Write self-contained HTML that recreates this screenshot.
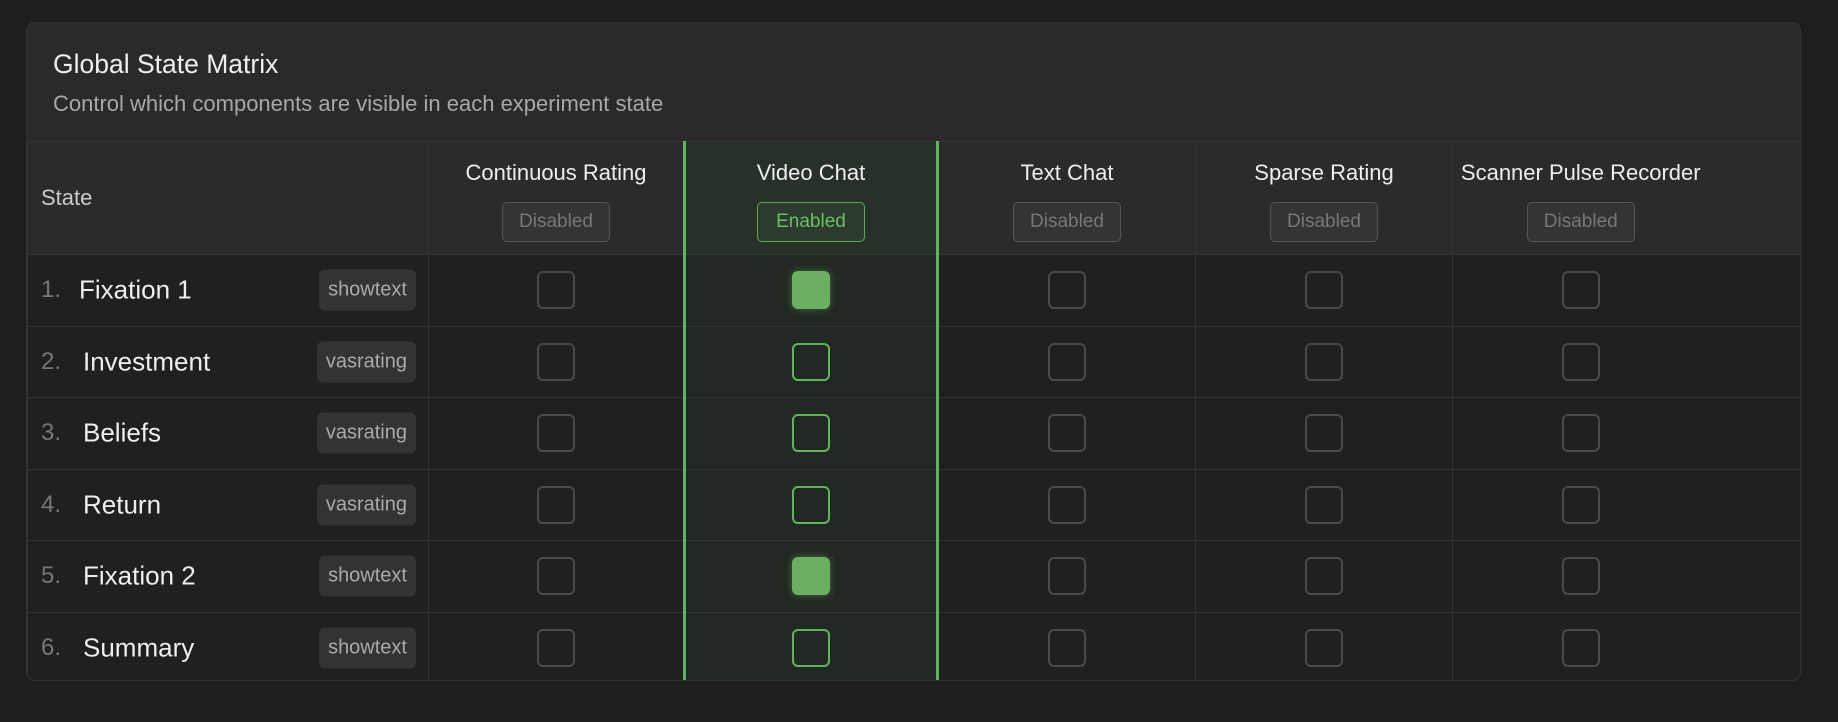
<!DOCTYPE html>
<html><head><style>
body{margin:0;background:#1e1e1e;font-family:"Liberation Sans",sans-serif;width:1838px;height:722px;overflow:hidden}
.card{position:absolute;left:26px;top:22px;width:1775px;height:659px;background:#2a2a2a;border:1px solid #333;border-radius:9px;overflow:hidden;box-sizing:border-box}
.t{position:absolute;left:26px;top:26px;font-size:26.5px;color:#eee}
.s{position:absolute;left:26px;top:68px;font-size:22px;color:#a8a8a8}
table{position:absolute;left:0;top:118px;border-collapse:collapse;table-layout:fixed;width:1775px}
td,th{border:1px solid #333;padding:0;text-align:center}
th{height:112px;background:#2b2b2b;font-weight:normal;color:#eee;font-size:22px;vertical-align:top;white-space:nowrap}
td{height:70.5px;background:#202020}
.fl{border-left-style:hidden!important}
.hv{background:#28302a!important}
.bv{background:#222823!important}
.gl{border-left:3px solid #62b45a}.gr{border-right:3px solid #62b45a}
.badge{display:inline-block;margin-top:16px;width:106px;height:38px;line-height:38px;border:1px solid #555;border-radius:5px;background:#343434;color:#777;font-size:19px}
.en{border-color:#5fa955;color:#6cbf62;background:#2c3b2d}
.cb{display:inline-block;width:34px;height:34px;border:2.5px solid #4a4a4a;border-radius:6px;vertical-align:middle}
.g{border-color:#62b45a}
.f{border-color:#6ab060;background:#6ab060;box-shadow:0 0 8px rgba(106,176,96,.5)}
.st{text-align:left;position:relative;font-size:26px;color:#eee}
.n{color:#777;position:absolute;left:13px;top:50%;transform:translateY(-50%);font-size:24px}
.nm{position:absolute;left:55px;top:50%;transform:translateY(-50%)}
.tag{position:absolute;right:12px;top:50%;transform:translateY(-50%);background:#333;border-radius:6px;color:#aaa;font-size:20px;padding:9px 9px}
</style></head><body>
<div class="card">
<div class="t">Global State Matrix</div>
<div class="s">Control which components are visible in each experiment state</div>
<table>
<colgroup><col style="width:401px"><col style="width:256px"><col style="width:253px"><col style="width:258px"><col style="width:257px"><col style="width:256px"><col></colgroup>
<tr><th style="text-align:left;vertical-align:middle;padding-left:13px;font-size:22px;color:#ccc">State</th>
<th><div style="margin-top:18px">Continuous Rating</div><span class="badge">Disabled</span></th>
<th class="hv gl gr"><div style="margin-top:18px">Video Chat</div><span class="badge en">Enabled</span></th>
<th><div style="margin-top:18px">Text Chat</div><span class="badge">Disabled</span></th>
<th><div style="margin-top:18px">Sparse Rating</div><span class="badge">Disabled</span></th>
<th><div style="margin-top:18px">Scanner Pulse Recorder</div><span class="badge">Disabled</span></th><th class="fl"></th></tr>
<tr><td class="st"><span class="n">1.</span><span class="nm" style="left:51px">Fixation 1</span><span class="tag">showtext</span></td><td><span class="cb"></span></td><td class="bv gl gr"><span class="cb f"></span></td><td><span class="cb"></span></td><td><span class="cb"></span></td><td><span class="cb"></span></td><td class="fl"></td></tr>
<tr><td class="st"><span class="n">2.</span><span class="nm">Investment</span><span class="tag">vasrating</span></td><td><span class="cb"></span></td><td class="bv gl gr"><span class="cb g"></span></td><td><span class="cb"></span></td><td><span class="cb"></span></td><td><span class="cb"></span></td><td class="fl"></td></tr>
<tr><td class="st"><span class="n">3.</span><span class="nm">Beliefs</span><span class="tag">vasrating</span></td><td><span class="cb"></span></td><td class="bv gl gr"><span class="cb g"></span></td><td><span class="cb"></span></td><td><span class="cb"></span></td><td><span class="cb"></span></td><td class="fl"></td></tr>
<tr><td class="st"><span class="n">4.</span><span class="nm">Return</span><span class="tag">vasrating</span></td><td><span class="cb"></span></td><td class="bv gl gr"><span class="cb g"></span></td><td><span class="cb"></span></td><td><span class="cb"></span></td><td><span class="cb"></span></td><td class="fl"></td></tr>
<tr><td class="st"><span class="n">5.</span><span class="nm">Fixation 2</span><span class="tag">showtext</span></td><td><span class="cb"></span></td><td class="bv gl gr"><span class="cb f"></span></td><td><span class="cb"></span></td><td><span class="cb"></span></td><td><span class="cb"></span></td><td class="fl"></td></tr>
<tr><td class="st"><span class="n">6.</span><span class="nm">Summary</span><span class="tag">showtext</span></td><td><span class="cb"></span></td><td class="bv gl gr"><span class="cb g"></span></td><td><span class="cb"></span></td><td><span class="cb"></span></td><td><span class="cb"></span></td><td class="fl"></td></tr>
</table>
</div>
</body></html>
